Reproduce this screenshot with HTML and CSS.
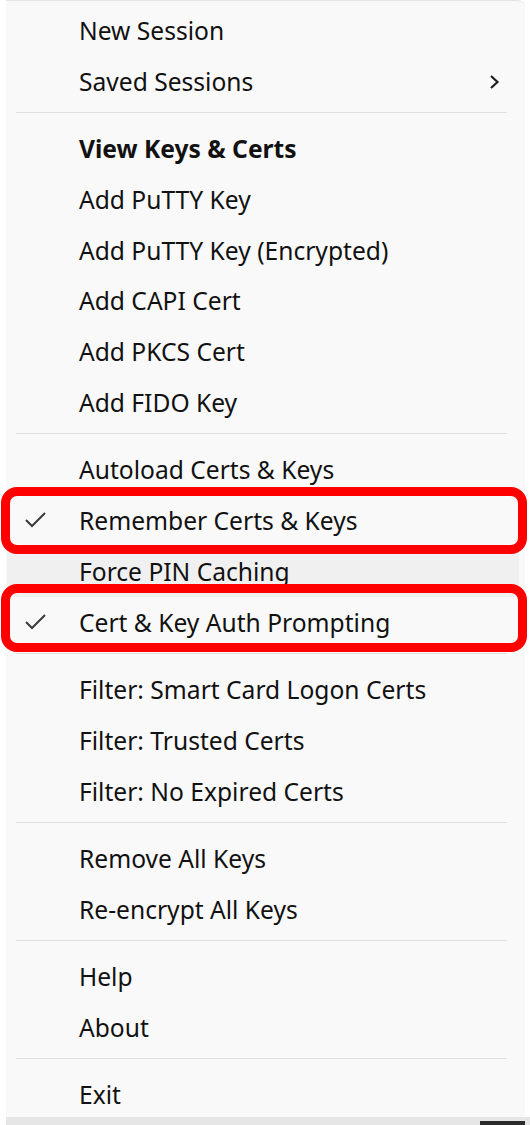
FILE: index.html
```html
<!DOCTYPE html>
<html>
<head>
<meta charset="utf-8">
<link rel="stylesheet" href="styles.css">
</head>
<body>
<div class="menu">
  <div class="item">New Session</div>
  <div class="item">Saved Sessions
    <svg class="chev" width="12" height="16" viewBox="0 0 12 16"><polyline points="2,2 8.5,8 2,14" fill="none" stroke="#1f1f1f" stroke-width="2.2"/></svg>
  </div>
  <div class="sep"></div>
  <div class="item bold">View Keys &amp; Certs</div>
  <div class="item">Add PuTTY Key</div>
  <div class="item">Add PuTTY Key (Encrypted)</div>
  <div class="item">Add CAPI Cert</div>
  <div class="item">Add PKCS Cert</div>
  <div class="item">Add FIDO Key</div>
  <div class="sep"></div>
  <div class="item">Autoload Certs &amp; Keys</div>
  <div class="item"><svg class="check" width="24" height="18" viewBox="0 0 24 18"><polyline points="2,9 8,15 21,2" fill="none" stroke="#3a3a3a" stroke-width="2"/></svg>Remember Certs &amp; Keys</div>
  <div class="item hover">Force PIN Caching</div>
  <div class="item"><svg class="check" width="24" height="18" viewBox="0 0 24 18"><polyline points="2,9 8,15 21,2" fill="none" stroke="#3a3a3a" stroke-width="2"/></svg>Cert &amp; Key Auth Prompting</div>
  <div class="sep"></div>
  <div class="item">Filter: Smart Card Logon Certs</div>
  <div class="item">Filter: Trusted Certs</div>
  <div class="item">Filter: No Expired Certs</div>
  <div class="sep"></div>
  <div class="item">Remove All Keys</div>
  <div class="item">Re-encrypt All Keys</div>
  <div class="sep"></div>
  <div class="item">Help</div>
  <div class="item">About</div>
  <div class="sep"></div>
  <div class="item">Exit</div>
  <div class="mark mark1"></div>
  <div class="mark mark2"></div>
</div>
<div class="strip"><div class="dark"></div></div>
</body>
</html>
```
FILE: styles.css
```css
html, body {
  margin: 0;
  padding: 0;
  background: #ffffff;
}
body {
  font-family: "Noto Sans", "Open Sans", sans-serif;
  color: #111111;
  width: 530px;
  height: 1125px;
  overflow: hidden;
}
.menu {
  position: relative;
  margin-left: 6px;
  width: 519px;
  background: #f9f9f9;
  border-top: 1px solid #e4e4e4;
  border-top-right-radius: 8px;
  padding-top: 4px;
  box-sizing: border-box;
  height: 1117px;
}
.item {
  position: relative;
  height: 50.8px;
  display: flex;
  align-items: center;
  padding-left: 73px;
  font-size: 24.6px;
  box-sizing: border-box;
}
.item.bold {
  font-weight: 700;
}
.item.hover {
  background: #f0f0f0;
  margin: 0 6px 0 1px;
  padding-left: 72px;
  border-radius: 4px;
}
.chev {
  position: absolute;
  left: 483px;
  top: 18px;
}
.check {
  position: absolute;
  left: 18px;
  top: 16px;
}
.sep {
  height: 1px;
  background: #e0e0e0;
  margin: 5.2px 18px 10.3px 10px;
}
.mark {
  position: absolute;
  left: -5px;
  width: 526px;
  border: 9px solid #ff0000;
  border-radius: 16px;
  box-sizing: border-box;
  pointer-events: none;
}
.mark1 {
  top: 486px;
  height: 67px;
}
.mark2 {
  top: 583px;
  height: 68px;
}
.strip {
  position: relative;
  margin-left: 6px;
  height: 8px;
  background: #e6e6e6;
}
.dark {
  position: absolute;
  left: 474px;
  top: 4px;
  width: 45px;
  height: 4px;
  background: #2b2b2b;
}
```
